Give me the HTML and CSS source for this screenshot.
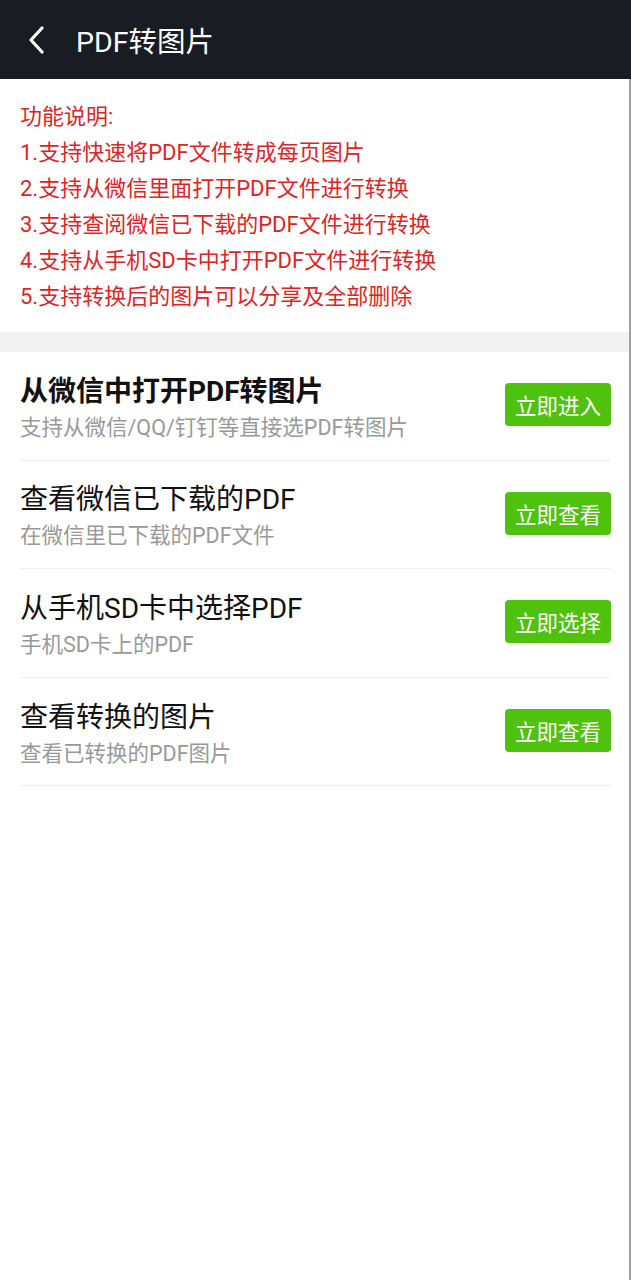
FILE: index.html
```html
<!doctype html>
<html lang="zh-CN">
  <head>
    <meta charset="UTF-8" />
    <meta name="viewport" content="width=device-width, initial-scale=1.0" />
    <title>PDF转图片</title>
    <link rel="stylesheet" href="styles.css">
  </head>
  <body>
    <header class="top-bar">
      <button class="back-btn" aria-label="返回">
        <svg width="20" height="28" viewBox="0 0 20 28">
          <path d="M15 2 L4 14 L15 26" fill="none" stroke="#fff" stroke-width="3.2" stroke-linecap="round" stroke-linejoin="round" />
        </svg>
      </button>
      <h1 class="top-title">PDF转图片</h1>
    </header>

    <main class="page">
      <section class="intro">
        <p>功能说明:</p>
        <p>1.支持快速将PDF文件转成每页图片</p>
        <p>2.支持从微信里面打开PDF文件进行转换</p>
        <p>3.支持查阅微信已下载的PDF文件进行转换</p>
        <p>4.支持从手机SD卡中打开PDF文件进行转换</p>
        <p>5.支持转换后的图片可以分享及全部删除</p>
      </section>

      <div class="spacer"></div>

      <ul class="action-list">
        <li class="action-item">
          <div class="action-text">
            <div class="action-title bold">从微信中打开PDF转图片</div>
            <div class="action-desc">支持从微信/QQ/钉钉等直接选PDF转图片</div>
          </div>
          <button class="action-btn">立即进入</button>
        </li>
        <li class="action-item">
          <div class="action-text">
            <div class="action-title">查看微信已下载的PDF</div>
            <div class="action-desc">在微信里已下载的PDF文件</div>
          </div>
          <button class="action-btn">立即查看</button>
        </li>
        <li class="action-item">
          <div class="action-text">
            <div class="action-title">从手机SD卡中选择PDF</div>
            <div class="action-desc">手机SD卡上的PDF</div>
          </div>
          <button class="action-btn">立即选择</button>
        </li>
        <li class="action-item">
          <div class="action-text">
            <div class="action-title">查看转换的图片</div>
            <div class="action-desc">查看已转换的PDF图片</div>
          </div>
          <button class="action-btn">立即查看</button>
        </li>
      </ul>
    </main>
  </body>
</html>
```

FILE: styles.css
```css
html,
body {
  margin: 0;
  padding: 0;
  height: 100%;
}

body {
  font-family: Roboto, "Noto Sans CJK SC", sans-serif;
  background: #fff;
  color: #111;
  display: flex;
  flex-direction: column;
}

.top-bar {
  height: 79px;
  background: #1a1c23;
  display: flex;
  align-items: center;
  flex-shrink: 0;
}

.back-btn {
  background: none;
  border: none;
  padding: 0;
  margin-left: 26px;
  width: 22px;
  height: 28px;
  display: flex;
  align-items: center;
  justify-content: center;
}

.top-title {
  margin: 0 0 0 28px;
  font-size: 28.5px;
  font-weight: 400;
  color: #fff;
}

/* main area, with the thin grey edge on the right */
.page {
  flex: 1;
  border-right: 2px solid #a0a0a0;
}

.intro {
  padding: 20px 20px 17px;
  color: #e02424;
  font-size: 22px;
}

.intro p {
  margin: 0;
  line-height: 36px;
}

.spacer {
  height: 20px;
  background: #f2f2f2;
}

.action-list {
  list-style: none;
  margin: 0;
  padding: 0 18px 0 20px;
}

.action-item {
  display: flex;
  align-items: center;
  justify-content: space-between;
  height: 107.6px;
  border-bottom: 1.5px solid #eeeeee;
}

.action-text {
  padding-top: 4px;
}

.action-title {
  font-size: 28px;
  line-height: 36px;
  color: #111;
}

.action-title.bold {
  font-weight: 700;
}

.action-desc {
  margin-top: 4px;
  font-size: 21.5px;
  line-height: 28px;
  color: #999;
}

.action-btn {
  background: #4fc20d;
  color: #fff;
  border: none;
  border-radius: 4px;
  font-family: inherit;
  font-size: 21.5px;
  height: 43px;
  padding: 0 10px;
  margin-bottom: 2px;
}
```
